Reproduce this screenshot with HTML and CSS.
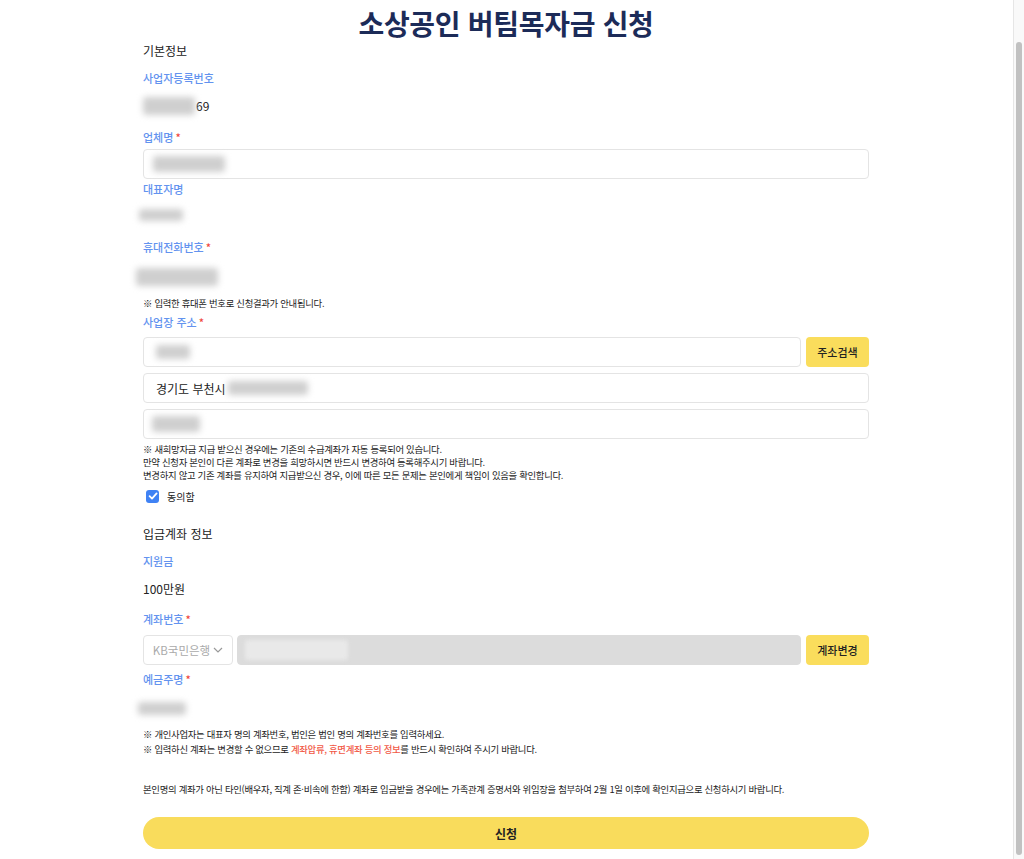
FILE: index.html
```html
<!DOCTYPE html>
<html lang="ko">
  <head>
    <meta charset="UTF-8" />
    <meta name="viewport" content="width=device-width, initial-scale=1.0" />
    <title>소상공인 버팀목자금 신청</title>
    <link rel="stylesheet" href="styles.css">
  </head>
  <body>
    <div class="wrap">
      <h1 class="title">소상공인 버팀목자금 신청</h1>

      <h2 class="section">기본정보</h2>

      <div class="label l-biz">사업자등록번호</div>
      <div class="value v-biz"><span class="blur b-biz"></span>69</div>

      <div class="label l-company">업체명<span class="req">*</span></div>
      <div class="field f-company"><span class="blur b-company"></span></div>

      <div class="label l-ceo">대표자명</div>
      <div class="value v-ceo"><span class="blur b-ceo"></span></div>

      <div class="label l-phone">휴대전화번호<span class="req">*</span></div>
      <div class="value v-phone"><span class="blur b-phone"></span></div>
      <p class="note n-phone">※ 입력한 휴대폰 번호로 신청결과가 안내됩니다.</p>

      <div class="label l-addr">사업장 주소<span class="req">*</span></div>
      <div class="addr">
        <div class="row">
          <div class="field grow"><span class="blur b-zip"></span></div>
          <button class="btn-yellow">주소검색</button>
        </div>
        <div class="field">경기도 부천시 <span class="blur b-addr1"></span></div>
        <div class="field"><span class="blur b-addr2"></span></div>
      </div>
      <p class="note n-account">
        ※ 새희망자금 지급 받으신 경우에는 기존의 수급계좌가 자동 등록되어 있습니다.<br />
        만약 신청자 본인이 다른 계좌로 변경을 희망하시면 반드시 변경하여 등록해주시기 바랍니다.<br />
        변경하지 않고 기존 계좌를 유지하여 지급받으신 경우, 이에 따른 모든 문제는 본인에게 책임이 있음을 확인합니다.
      </p>
      <label class="agree">
        <span class="check">
          <svg width="12" height="12" viewBox="0 0 12 12"><path d="M2.6 6.2 L5 8.6 L9.6 3.4" fill="none" stroke="#fff" stroke-width="1.8" stroke-linecap="round" stroke-linejoin="round"/></svg>
        </span>
        동의함
      </label>

      <h2 class="section s-bank">입금계좌 정보</h2>

      <div class="label l-fund">지원금</div>
      <div class="value v-fund">100만원</div>

      <div class="label l-acc">계좌번호<span class="req">*</span></div>
      <div class="row r-acc">
        <div class="select">KB국민은행
          <svg width="10" height="6" viewBox="0 0 10 6"><path d="M1 1 L5 5 L9 1" fill="none" stroke="#999" stroke-width="1.2"/></svg>
        </div>
        <div class="field grow disabled"><span class="blur b-accno"></span></div>
        <button class="btn-yellow">계좌변경</button>
      </div>

      <div class="label l-holder">예금주명<span class="req">*</span></div>
      <div class="value v-holder"><span class="blur b-holder"></span></div>

      <p class="note n-holder">
        ※ 개인사업자는 대표자 명의 계좌번호, 법인은 법인 명의 계좌번호를 입력하세요.<br />
        ※ 입력하신 계좌는 변경할 수 없으므로 <span class="red">계좌압류, 휴면계좌 등의 정보</span>를 반드시 확인하여 주시기 바랍니다.
      </p>

      <p class="note n-other">본인명의 계좌가 아닌 타인(배우자, 직계 존·비속에 한함) 계좌로 입금받을 경우에는 가족관계 증명서와 위임장을 첨부하여 2월 1일 이후에 확인지급으로 신청하시기 바랍니다.</p>

      <button class="submit">신청</button>
    </div>

    <!-- page scrollbar as seen in the capture -->
    <div class="scrollbar"><div class="thumb"></div></div>
  </body>
</html>
```

FILE: styles.css
```css
body {
  margin: 0;
  padding-right: 12px;
  background: #fff;
  color: #222;
  font-family: "Noto Sans CJK KR", "Noto Sans", sans-serif;
}
.wrap {
  width: 726px;
  margin: 0 auto;
  padding-bottom: 4px;
}
.title {
  margin: 3px 0 0;
  font-size: 28px;
  line-height: 40px;
  font-weight: 700;
  text-align: center;
  color: #1c2b58;
  letter-spacing: -0.3px;
}
.section {
  margin: 0;
  font-size: 12px;
  line-height: 16px;
  font-weight: 400;
  color: #222;
}
.s-bank {
  margin-top: 22px;
}
.label {
  font-size: 11px;
  line-height: 16px;
  font-weight: 500;
  color: #6393ef;
}
.req {
  color: #f0473b;
  margin-left: 2px;
}
.value {
  font-size: 12px;
  line-height: 20px;
  display: flex;
  align-items: center;
}
.blur {
  display: inline-block;
  background: #cfcfcf;
  filter: blur(3px);
  border-radius: 3px;
}
.field {
  height: 30px;
  box-sizing: border-box;
  border: 1px solid #e4e4e4;
  border-radius: 4px;
  background: #fff;
  display: flex;
  align-items: center;
  padding: 0 12px;
  font-size: 12px;
}
.grow {
  flex: 1;
}
.row {
  display: flex;
  gap: 5px;
}
.btn-yellow {
  width: 63px;
  height: 30px;
  border: none;
  border-radius: 4px;
  background: #fadd5c;
  font-family: inherit;
  font-size: 11px;
  font-weight: 500;
  color: #222;
  padding: 0;
}
.note {
  margin: 0;
  font-size: 9.4px;
  color: #222;
  letter-spacing: -0.3px;
}

.l-biz { margin-top: 11px; }
.v-biz { margin-top: 10px; }
.b-biz { width: 52px; height: 18px; margin-right: 1px; }
.l-company { margin-top: 13px; }
.f-company { margin-top: 4px; padding-left: 9px; }
.b-company { width: 72px; height: 16px; }
.l-ceo { margin-top: 2px; }
.v-ceo { margin-top: 9px; height: 18px; }
.b-ceo { width: 44px; height: 12px; margin-left: -4px; }
.l-phone { margin-top: 15px; }
.v-phone { margin-top: 10px; height: 23px; }
.b-phone { width: 82px; height: 18px; margin-left: -7px; }
.n-phone { margin-top: 8px; line-height: 14px; }
.l-addr { margin-top: 4px; }
.addr {
  margin-top: 7px;
  display: flex;
  flex-direction: column;
  gap: 6px;
}
.b-zip { width: 34px; height: 14px; }
.b-addr1 { width: 80px; height: 14px; margin-left: 2px; }
.b-addr2 { width: 48px; height: 16px; margin-left: -4px; }
.n-account {
  margin-top: 4px;
  line-height: 13px;
}
.agree {
  margin-top: 6px;
  display: flex;
  align-items: center;
  height: 16px;
  font-size: 10px;
  padding-left: 3px;
}
.check {
  width: 13px;
  height: 13px;
  border-radius: 3px;
  background: #3f82f4;
  display: inline-flex;
  align-items: center;
  justify-content: center;
  margin-right: 8px;
}
.l-fund { margin-top: 11px; }
.v-fund { margin-top: 10px; }
.l-acc { margin-top: 12px; }
.r-acc { margin-top: 8px; }
.select {
  width: 90px;
  height: 30px;
  box-sizing: border-box;
  border: 1px solid #e4e4e4;
  border-radius: 4px;
  display: flex;
  align-items: center;
  justify-content: center;
  gap: 3px;
  font-size: 11.5px;
  color: #aaa;
  margin-right: -1px;
}
.disabled {
  background: #dcdcdc;
  border-color: #dcdcdc;
  padding-left: 7px;
}
.b-accno { width: 103px; height: 20px; background: #e9e9e9; filter: blur(2px); }
.l-holder { margin-top: 6px; }
.v-holder { margin-top: 13px; height: 17px; }
.b-holder { width: 48px; height: 13px; margin-left: -5px; }
.n-holder {
  margin-top: 10px;
  line-height: 15px;
}
.red {
  color: #f15a47;
  font-weight: 500;
}
.n-other {
  margin-top: 24px;
  line-height: 16px;
}
.submit {
  display: block;
  width: 100%;
  margin-top: 20px;
  height: 32px;
  border: none;
  border-radius: 16px;
  background: #f9dc5c;
  font-family: inherit;
  font-size: 12px;
  font-weight: 700;
  color: #222;
}
.scrollbar {
  position: fixed;
  top: 0;
  right: 0;
  bottom: 0;
  width: 10px;
  background: #f9f9f9;
  border-left: 1px solid #e6e6e6;
}
.thumb {
  margin: 42px 0 0 2px;
  width: 6px;
  height: 813px;
  border-radius: 3px;
  background: #c1c1c1;
}
```
